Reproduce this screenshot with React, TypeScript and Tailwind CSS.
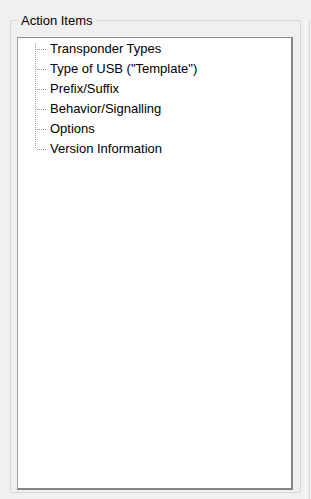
import React from "react";

const items = [
  "Transponder Types",
  'Type of USB ("Template")',
  "Prefix/Suffix",
  "Behavior/Signalling",
  "Options",
  "Version Information",
];

function Connector({ first, last }: { first: boolean; last: boolean }) {
  const y1 = first ? 4 : 0;
  const y2 = last ? 10 : 20;
  return (
    <svg width="14" height="20" className="shrink-0" shapeRendering="crispEdges">
      <line x1="0.5" y1={y1} x2="0.5" y2={y2} stroke="#9a9a9a" strokeWidth="1" strokeDasharray="1 1" />
      <line x1="2" y1="10.5" x2="12" y2="10.5" stroke="#9a9a9a" strokeWidth="1" strokeDasharray="1 1" />
    </svg>
  );
}

export default function App() {
  return (
    <div
      className="w-[311px] h-[499px] bg-[#f0f0f0] overflow-hidden flex text-black"
      style={{ fontFamily: '"Liberation Sans", Arial, sans-serif' }}
    >
      <div className="pl-[10px] pt-[20px]">
        <div className="relative w-[291px] h-[473px] border border-[#d6d6d6] rounded-[2px]">
          <div className="absolute left-[7px] top-[-8px] bg-[#f0f0f0] px-[3px] text-[13px] leading-[16px]">
            Action Items
          </div>
          <div className="ml-[6px] mt-[16px] w-[276px] h-[453px] bg-white border-l border-t border-r-2 border-b-2 border-l-[#a0a0a0] border-t-[#8c8c8c] border-r-[#858585] border-b-[#858585] pt-[1px]">
            <div className="flex flex-col pl-[17px]">
              {items.map((t, i) => (
                <div key={t} className="flex items-center h-[20px]">
                  <Connector first={i === 0} last={i === items.length - 1} />
                  <span className="ml-[1px] text-[13px] leading-[20px] whitespace-nowrap">{t}</span>
                </div>
              ))}
            </div>
          </div>
        </div>
      </div>
      <div className="ml-[4px] mt-[20px] h-[480px] border-l border-white" />
      <div className="ml-[3px] mt-[20px] h-[480px] border-l border-[#dadada]" />
    </div>
  );
}
